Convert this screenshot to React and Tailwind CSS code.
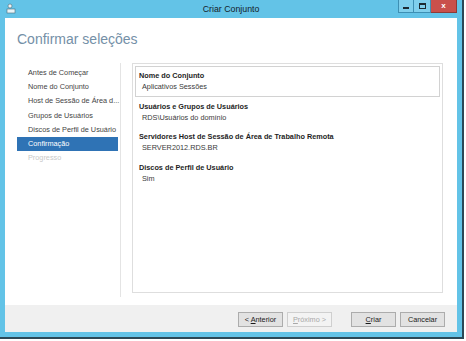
import React from 'react';

const navItems = [
  { label: 'Antes de Começar' },
  { label: 'Nome do Conjunto' },
  { label: 'Host de Sessão de Área d...' },
  { label: 'Grupos de Usuários' },
  { label: 'Discos de Perfil de Usuário' },
  { label: 'Confirmação', active: true },
  { label: 'Progresso', disabled: true },
];

const details = [
  { title: 'Nome do Conjunto', value: 'Aplicativos Sessões', focused: true },
  { title: 'Usuários e Grupos de Usuários', value: 'RDS\\Usuários do domínio' },
  { title: 'Servidores Host de Sessão de Área de Trabalho Remota', value: 'SERVER2012.RDS.BR' },
  { title: 'Discos de Perfil de Usuário', value: 'Sim' },
];

const WizardButton = ({ children, disabled, className = '' }) => (
  <button
    className={
      'h-[15px] w-[45px] border text-[7.3px] leading-none ' +
      (disabled
        ? 'border-[#cfcfcf] bg-[#f3f3f3] text-[#a8a8a8] '
        : 'border-[#acacac] bg-[#e2e2e2] text-[#1a1a1a] ') +
      className
    }
  >
    {children}
  </button>
);

const App = () => {
  return (
    <div
      className="w-[466px] h-[341px] bg-white overflow-hidden"
      style={{ fontFamily: '"Liberation Sans", Arial, sans-serif' }}
    >
      <div className="w-[464px] h-[339px] border-r-2 border-b-2 border-[#2c4856]">
        <div className="flex flex-col h-full bg-[#63c3e7] px-[5px] pb-[5px]">
          {/* Title bar */}
          <div className="relative h-[18px] flex items-center justify-center">
            <svg className="absolute left-[1px] top-[3px]" width="10" height="11" viewBox="0 0 10 11">
              <rect x="1" y="6" width="8" height="4" fill="#e8f4f8" stroke="#4a6b7a" strokeWidth="0.6" />
              <circle cx="4" cy="3" r="2" fill="#f2f2f2" stroke="#4a6b7a" strokeWidth="0.6" />
            </svg>
            <span className="text-[8.8px] text-[#14222a] pt-[1px]">Criar Conjunto</span>
            <div className="absolute right-0 top-0 flex h-[13px]">
              <div className="w-[16px] h-full bg-[#7fcfec] border border-[#3d8fb3] border-t-0 flex items-end justify-center pb-[3px]">
                <div className="w-[6px] h-[2px] bg-[#1c2b33]" />
              </div>
              <div className="w-[17px] h-full bg-[#7fcfec] border-b border-r border-[#3d8fb3] flex items-center justify-center">
                <div className="w-[7px] h-[6px] border border-[#1c2b33] border-t-2" />
              </div>
              <div className="w-[26px] h-full bg-[#c9504b] border-b border-r border-[#8e3a36] flex items-center justify-center">
                <span className="text-white text-[8px] font-bold leading-none">x</span>
              </div>
            </div>
          </div>

          {/* Content */}
          <div className="flex-1 flex flex-col bg-white">
            <div className="pt-[13px] pl-[12px] h-[45px]">
              <h1 className="text-[14px] leading-[16px] font-light text-[#7490a7]">Confirmar seleções</h1>
            </div>

            <div className="flex h-[234px]">
              {/* Left nav */}
              <div className="w-[116px] border-r border-[#e4e4e4] pt-[3px] pl-[12px] pr-[2px]">
                {navItems.map((item) => (
                  <div
                    key={item.label}
                    className={
                      'h-[14.2px] leading-[14.2px] pl-[11px] text-[7.3px] whitespace-nowrap ' +
                      (item.active
                        ? 'bg-[#2f73b5] text-white'
                        : item.disabled
                        ? 'text-[#c9c9c9]'
                        : 'text-[#444444]')
                    }
                  >
                    {item.label}
                  </div>
                ))}
              </div>

              {/* Details panel */}
              <div className="ml-[11px] w-[311px] h-[230px] border border-[#dedede] p-[2px]">
                {details.map((d) => (
                  <div
                    key={d.title}
                    className={
                      'h-[30.7px] pt-[4px] pl-[3px] border ' +
                      (d.focused ? 'border-[#d2d2d2]' : 'border-transparent')
                    }
                  >
                    <div className="text-[7.3px] leading-[10px] font-bold text-[#1e1e1e]">{d.title}</div>
                    <div className="text-[7.3px] leading-[11px] pl-[3px] text-[#3a3a3a]">{d.value}</div>
                  </div>
                ))}
              </div>
            </div>

            <div className="flex-1" />

            {/* Footer */}
            <div className="h-[27px] bg-[#f0f0f0] flex items-start justify-end pt-[7px] pr-[12px]">
              <WizardButton>
                &lt; <span className="underline">A</span>nterior
              </WizardButton>
              <WizardButton disabled className="ml-[4px]">
                <span className="underline">P</span>róximo &gt;
              </WizardButton>
              <WizardButton className="ml-[19px]">
                <span className="underline">C</span>riar
              </WizardButton>
              <WizardButton className="ml-[4px]">Cancelar</WizardButton>
            </div>
          </div>
        </div>
      </div>
    </div>
  );
};

export default App;
